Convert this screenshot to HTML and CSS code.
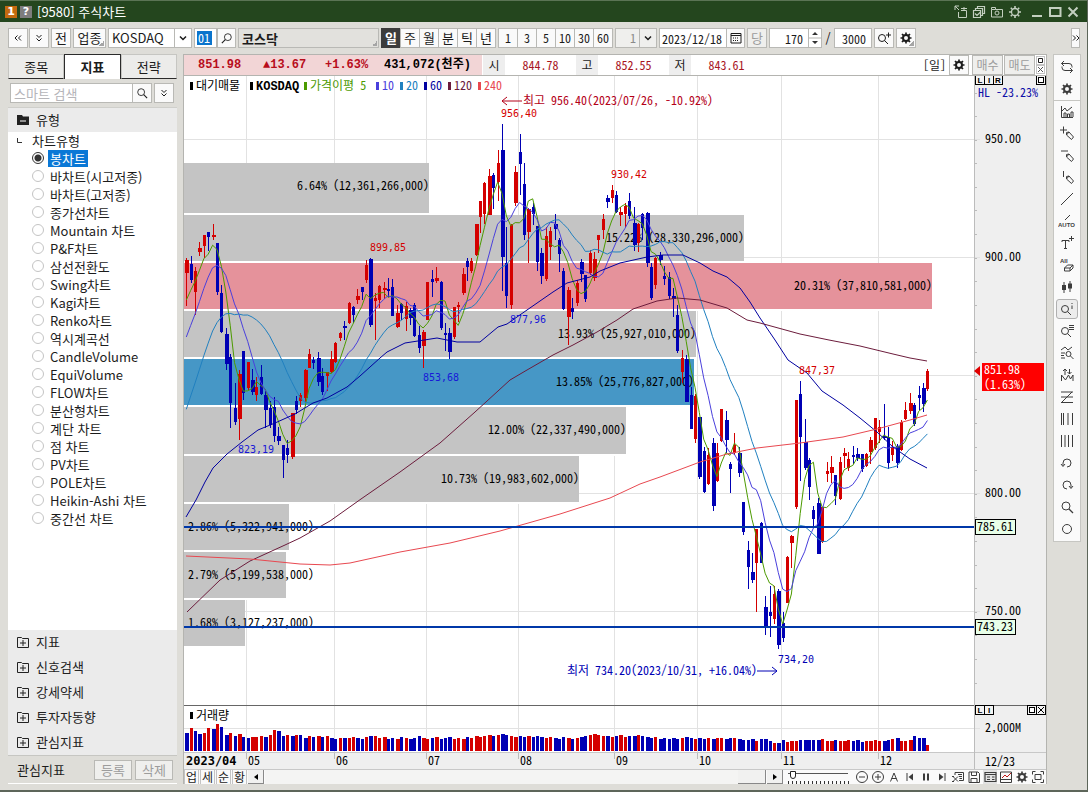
FILE: index.html
```html
<!DOCTYPE html>
<html lang="ko">
<head>
<meta charset="utf-8">
<title>[9580] 주식차트</title>
<link rel="stylesheet" href="styles.css">
</head>
<body>
<svg class="defs" aria-hidden="true">
  <symbol id="gear" viewBox="0 0 14 14"><circle cx="7" cy="7" r="3" fill="none" stroke="currentColor" stroke-width="2"/><path d="M7 1.500v2.500M7 10v2.500M1.500 7H4M10 7h2.500M3 3l1.700 1.700M9.300 9.300L11 11M11 3L9.300 4.700M4.700 9.300L3 11" stroke="currentColor" stroke-width="1.700" fill="none"/></symbol>
  <symbol id="sun" viewBox="0 0 14 14"><circle cx="7" cy="7" r="3.500" fill="none" stroke="currentColor" stroke-width="1.300"/><path d="M7 1v2M7 11v2M1 7h2M11 7h2M2.800 2.800l1.400 1.400M9.800 9.800l1.400 1.400M11.200 2.800L9.800 4.200M4.200 9.800l-1.400 1.400" stroke="currentColor" stroke-width="1.600" fill="none"/></symbol>
  <symbol id="lens" viewBox="0 0 14 14"><circle cx="6" cy="6" r="4" fill="none" stroke="currentColor"/><path d="M9 9l4 4" stroke="currentColor" stroke-width="1.300"/></symbol>
  <symbol id="down" viewBox="0 0 10 10"><path d="M2 3.500l3 3 3-3" fill="none" stroke="currentColor" stroke-width="1.500"/></symbol>
  <symbol id="ddown" viewBox="0 0 10 10"><path d="M2.500 2L5 4.500 7.500 2M2.500 5.500L5 8l2.500-2.500" fill="none" stroke="currentColor"/></symbol>
  <symbol id="dleft" viewBox="0 0 10 10"><path d="M4.500 2.500L2 5l2.500 2.500M8 2.500L5.500 5 8 7.500" fill="none" stroke="currentColor"/></symbol>
  <symbol id="dright" viewBox="0 0 10 10"><path d="M2 2.500L4.500 5 2 7.500M5.500 2.500L8 5 5.500 7.500" fill="none" stroke="currentColor"/></symbol>
  <symbol id="plusbox" viewBox="0 0 12 12"><path d="M.5 1.500h4l1 1h6v9H.5zM3 7h6M6 4v6" fill="none" stroke="currentColor"/></symbol>
  <symbol id="pencil" viewBox="0 0 14 14"><path d="M6.500 6.500l2.500-.5 4.500 5-2 2.500-5-4.500zM6.500 9l2.500-3" fill="none" stroke="currentColor"/></symbol>
</svg>

<header class="titlebar">
  <span class="badge badge-num">1</span><span class="badge badge-help">?</span>
  <h1 class="title">[9580] 주식차트</h1>
  <div class="window-tools">
    <button aria-label="분리"><svg viewBox="0 0 14 14"><path d="M1 5V1h4M1 1l4 4M7 3.500h6M4.500 7v5.500h8V5.500H7M10 2v3" fill="none" stroke="currentColor"/></svg></button>
    <button aria-label="복사"><svg viewBox="0 0 14 14"><path d="M1.500 5.500h7v7h-7zM3.500 5V3.500h7v7H9M5.500 3V1.500h7v7H11M3 8.500l2 2 4-4" fill="none" stroke="currentColor" stroke-width="1.200"/></svg></button>
    <button aria-label="캡처"><svg viewBox="0 0 14 14"><path d="M1.500 4.500V2.500h4v2h7v7.500h-11V4.500h4" fill="none" stroke="currentColor"/><circle cx="7" cy="8" r="2" fill="none" stroke="currentColor"/></svg></button>
    <button aria-label="설정"><svg><use href="#sun"/></svg></button>
    <button aria-label="최소화" class="wide"><svg viewBox="0 0 14 14"><path d="M2 11h10" stroke="currentColor" stroke-width="2"/></svg></button>
    <button aria-label="최대화"><svg viewBox="0 0 14 14"><path d="M2 3h10.500v8H2z" fill="none" stroke="currentColor" stroke-width="2"/></svg></button>
    <button aria-label="닫기"><svg viewBox="0 0 14 14"><path d="M2.500 2.500l9 9M11.500 2.500l-9 9" stroke="currentColor" stroke-width="2"/></svg></button>
  </div>
</header>

<div class="toolbar">
  <div class="cluster tight">
    <button class="btn sq" aria-label="이전"><svg class="i10"><use href="#dleft"/></svg></button>
    <button class="btn sq" aria-label="펼치기"><svg class="i10"><use href="#ddown"/></svg></button>
  </div>
  <button class="btn sq">전</button>
  <button class="btn corner kind">업종</button>
  <div class="field market"><select aria-label="시장"><option>KOSDAQ</option></select><svg class="i10"><use href="#down"/></svg></div>
  <div class="cluster">
    <div class="field code"><input aria-label="종목코드" value="01"></div>
    <button class="btn sq flip" aria-label="검색"><svg class="i12"><use href="#lens"/></svg></button>
  </div>
  <div class="field name"><input aria-label="종목명" value="코스닥" readonly></div>
  <div class="cluster seg">
    <button class="btn on">일</button><button class="btn">주</button><button class="btn">월</button><button class="btn">분</button><button class="btn">틱</button><button class="btn">년</button>
  </div>
  <div class="cluster seg num">
    <button class="btn">1</button><button class="btn">3</button><button class="btn">5</button><button class="btn">10</button><button class="btn">30</button><button class="btn">60</button>
  </div>
  <div class="field unit num"><select aria-label="단위" disabled><option>1</option></select><svg class="i10"><use href="#down"/></svg></div>
  <div class="cluster">
    <div class="field date num"><input aria-label="날짜" value="2023/12/18"></div>
    <button class="btn sq" aria-label="달력"><svg class="i12" viewBox="0 0 12 12"><path d="M1 1.500h10v9.500H1zM1 3.500h10" fill="none" stroke="currentColor"/><path d="M3 6h6M3 8.500h6" stroke="currentColor" stroke-dasharray="1 1"/></svg></button>
  </div>
  <button class="btn sq" disabled>당</button>
  <div class="field count num"><input aria-label="봉 개수" value="170"><svg class="spin" viewBox="0 0 12 18"><path d="M0 9h12" stroke="#b4b4b0"/><path d="M3 6l3-3 3 3zM3 12h6l-3 3z" fill="#333"/></svg></div>
  <span class="slash">/</span>
  <div class="field total num"><input aria-label="전체 개수" value="3000"></div>
  <button class="btn sq" aria-label="확대"><svg class="i14" viewBox="0 0 14 14"><circle cx="5" cy="7" r="3.500" fill="none" stroke="currentColor"/><path d="M7.500 9.500l3.500 3.500M9 4h5M11.500 1.500v5" stroke="currentColor"/></svg></button>
  <button class="btn sq corner" aria-label="차트 설정"><svg class="i14"><use href="#gear"/></svg></button>
  <button class="btn more" aria-label="더보기"><svg class="i10"><use href="#dright"/></svg></button>
</div>

<main class="main">
  <aside class="side">
    <nav class="tabs"><button>종목</button><button class="on">지표</button><button>전략</button></nav>
    <div class="search">
      <div class="field"><input aria-label="스마트 검색" placeholder="스마트 검색"></div>
      <button class="btn sq" aria-label="찾기"><svg class="i12"><use href="#lens"/></svg></button>
      <button class="btn sq apart" aria-label="펼치기"><svg class="i10"><use href="#ddown"/></svg></button>
    </div>
    <button class="group top"><svg class="i12" viewBox="0 0 12 12"><path d="M0 1h5l1 1.500h6V11H0z" fill="currentColor"/><path d="M3 7h6" stroke="#fff"/></svg>유형</button>
    <fieldset class="tree">
      <legend><svg viewBox="0 0 8 8"><path d="M1.500 1v4.500H6" fill="none" stroke="#333"/></svg>차트유형</legend>
      <label><input type="radio" name="type" checked><span>봉차트</span></label>
      <label><input type="radio" name="type"><span>바차트(시고저종)</span></label>
      <label><input type="radio" name="type"><span>바차트(고저종)</span></label>
      <label><input type="radio" name="type"><span>종가선차트</span></label>
      <label><input type="radio" name="type"><span>Mountain 차트</span></label>
      <label><input type="radio" name="type"><span>P&amp;F차트</span></label>
      <label><input type="radio" name="type"><span>삼선전환도</span></label>
      <label><input type="radio" name="type"><span>Swing차트</span></label>
      <label><input type="radio" name="type"><span>Kagi차트</span></label>
      <label><input type="radio" name="type"><span>Renko차트</span></label>
      <label><input type="radio" name="type"><span>역시계곡선</span></label>
      <label><input type="radio" name="type"><span>CandleVolume</span></label>
      <label><input type="radio" name="type"><span>EquiVolume</span></label>
      <label><input type="radio" name="type"><span>FLOW차트</span></label>
      <label><input type="radio" name="type"><span>분산형차트</span></label>
      <label><input type="radio" name="type"><span>계단 차트</span></label>
      <label><input type="radio" name="type"><span>점 차트</span></label>
      <label><input type="radio" name="type"><span>PV차트</span></label>
      <label><input type="radio" name="type"><span>POLE차트</span></label>
      <label><input type="radio" name="type"><span>Heikin-Ashi 차트</span></label>
      <label><input type="radio" name="type"><span>중간선 차트</span></label>
    </fieldset>
    <button class="group"><svg class="i12"><use href="#plusbox"/></svg>지표</button>
    <button class="group"><svg class="i12"><use href="#plusbox"/></svg>신호검색</button>
    <button class="group"><svg class="i12"><use href="#plusbox"/></svg>강세약세</button>
    <button class="group"><svg class="i12"><use href="#plusbox"/></svg>투자자동향</button>
    <button class="group"><svg class="i12"><use href="#plusbox"/></svg>관심지표</button>
    <div class="side-foot"><span>관심지표</span><button class="btn" disabled>등록</button><button class="btn" disabled>삭제</button></div>
  </aside>

  <section class="chart">
    <div class="quote">
      <div class="now"><b class="q1">851.98</b><b class="q2">▲13.67</b><b class="q3">+1.63%</b><b class="q4">431,072(천주)</b></div>
      <span class="tag">시</span><span class="val">844.78</span>
      <span class="tag">고</span><span class="val">852.55</span>
      <span class="tag">저</span><span class="val">843.61</span>
      <span class="period">[일]</span>
      <button class="btn sq" aria-label="설정"><svg class="i14"><use href="#gear"/></svg></button>
      <button class="btn trade" disabled>매수</button><button class="btn trade" disabled>매도</button>
      <div class="stack"><button aria-label="최대화"><svg viewBox="0 0 9 9"><path d="M2.500 2.500h4v4h-4z" fill="none" stroke="#222"/></svg></button><button aria-label="닫기"><svg viewBox="0 0 9 9"><path d="M2 2l5 5M7 2L2 7" stroke="#555"/></svg></button></div>
    </div>
    <svg class="plot" id="plot" role="img" aria-label="코스닥 일봉 차트"></svg>
    <div class="foot">
      <button class="mini">업</button><button class="mini">세</button><button class="mini">순</button><button class="mini">황</button>
      <button class="arrow" aria-label="왼쪽"><svg viewBox="0 0 8 8"><path d="M6 1v6L2 4z"/></svg></button>
      <div class="track"><div class="thumb"></div></div>
      <button class="arrow" aria-label="오른쪽"><svg viewBox="0 0 8 8"><path d="M2 1v6l4-3z"/></svg></button>
      <div class="range"><input type="range" aria-label="배율" min="0" max="100" value="4"></div>
      <div class="foot-icons">
        <button aria-label="축소"><svg viewBox="0 0 14 14"><circle cx="7" cy="7" r="5.500"/><path d="M4 7h6"/></svg></button>
        <button aria-label="확대"><svg viewBox="0 0 14 14"><circle cx="7" cy="7" r="5.500"/><path d="M4 7h6M7 4v6"/></svg></button>
        <button aria-label="글자"><svg viewBox="0 0 14 14"><path d="M3.500 11.500L7 3l3.500 8.500M4.500 8.500h5"/></svg></button>
        <button aria-label="처음"><svg viewBox="0 0 14 14"><path d="M4 3v8"/><path class="solid" d="M10 3.500v7L5.500 7z"/></svg></button>
        <button aria-label="정지"><svg viewBox="0 0 14 14"><path d="M5 3.500v7M9 3.500v7" stroke-width="2"/></svg></button>
        <button aria-label="끝"><svg viewBox="0 0 14 14"><path d="M10 3v8"/><path class="solid" d="M4 3.500v7L8.500 7z"/></svg></button>
        <button aria-label="엑셀"><svg viewBox="0 0 14 14"><path d="M4 5V2.500h8.500v8H8M7 4.500h4M8 6.500h3M8.500 8.500H11M2 6.500l5 5M7 6.500l-5 5M1 6.500h2M1 11.500h2"/></svg></button>
        <button aria-label="저장"><svg viewBox="0 0 14 14"><path d="M2 2h9l1.500 1.500V12.500H2zM4.500 2v3.500h5V2M4 12.500V8.500h6v4"/></svg></button>
        <button aria-label="표" class="on"><svg viewBox="0 0 14 14"><path d="M2 2.500h11v9H2zM2 4.500h11M4 7h3M4 9.500h3M9 7h2.500M9 9.500h2.500" stroke-width="1.200"/></svg></button>
        <button aria-label="차트"><svg viewBox="0 0 14 14"><path d="M1.500 2h11v10.500h-11zM2 9.500h10"/><path d="M3 8l3-3 2 2 4-4" stroke="#c01818"/></svg></button>
        <button aria-label="설정"><svg><use href="#gear" stroke="none"/></svg></button>
        <button aria-label="전체"><svg viewBox="0 0 14 14"><path d="M1.500 4.500v-3h3M9.500 1.500h3v3M12.500 9.500v3h-3M4.500 12.500h-3v-3M4 4.500h6v5H4z"/></svg></button>
      </div>
    </div>
  </section>

  <aside class="rail">
    <button aria-label="새로고침"><svg viewBox="0 0 14 14"><path d="M4 1L1.500 3.500 4 6M1.500 3.500H9a3 3 0 013 3v1M10 8l2.500 2.500L10 13M12.500 10.500H5a3 3 0 01-3-3v-1"/></svg></button>
    <button aria-label="설정"><svg><use href="#gear" stroke="none"/></svg></button>
    <button aria-label="지표 추가" class="rule"><svg viewBox="0 0 14 14"><path d="M1.500 1v11.500H13M4 12V8h2v4M7.500 12V9h2v3M11 12V7h2v5M2 6l3-3 2 3 5-4"/></svg></button>
    <button aria-label="십자선"><svg viewBox="0 0 14 14"><path d="M0 4h7M3.500 .5v7"/><use href="#pencil"/></svg></button>
    <button aria-label="수평선"><svg viewBox="0 0 14 14"><path d="M1 3h7"/><use href="#pencil"/></svg></button>
    <button aria-label="수직선"><svg viewBox="0 0 14 14"><path d="M3.500 1v6"/><use href="#pencil"/></svg></button>
    <button aria-label="추세선"><svg viewBox="0 0 14 14"><path d="M1 13L13 1"/></svg></button>
    <button aria-label="자동 추세선"><svg class="w16" viewBox="0 0 18 14"><path d="M7 6l5-5"/><text x="0" y="13">AUTO</text></svg></button>
    <button aria-label="문자"><svg viewBox="0 0 14 14"><path d="M2 6V4.500h7V6M5.500 4.500v8M4 12.500h3M9 2.500h5M11.500 0v5"/></svg></button>
    <button aria-label="모두 지우기"><svg viewBox="0 0 14 14"><text x="0" y="5">All</text><path d="M4.500 10l3-3H13l-3 3zM4.500 10v3H10v-3M10 13l3-3V7"/></svg></button>
    <button aria-label="봉"><svg viewBox="0 0 14 14"><path d="M4 2v11M10 1v11"/><path class="solid" d="M2 5h4v5H2zM8 3.500h4v5H8z"/></svg></button>
    <button aria-label="정보" class="on"><svg viewBox="0 0 14 14"><circle cx="5" cy="7" r="3.500"/><path d="M7.500 9.500L11 13M12 1v1M12 3.500V7"/></svg></button>
    <button aria-label="목록 조회"><svg viewBox="0 0 14 14"><circle cx="5" cy="7" r="3.500"/><path d="M7.500 9.500L11 13M9 1.500h5M9 3.500h5M9 5.500h5"/></svg></button>
    <button aria-label="차트 조회"><svg viewBox="0 0 14 14"><path d="M1 4l4-3 3 3 4-3M1 7h4M1 9.500h3M1 12h4"/><circle cx="8.500" cy="8" r="2.500"/><path d="M10.500 10l3 3"/></svg></button>
    <button aria-label="패턴"><svg viewBox="0 0 14 14"><path d="M1.500 13V7l4 5 3-5 2 4 2.500-4v6M5 7V1M3 3l2-2 2 2M9.500 1v5M7.500 4l2 2 2-2"/></svg></button>
    <button aria-label="지그재그"><svg viewBox="0 0 14 14"><path d="M1 2h12M1 12.500h12M1 7h12M12 2L2 12"/></svg></button>
    <button aria-label="시간대"><svg viewBox="0 0 14 14"><path d="M1.500 1v12M3.500 1v12M8 1v12M12.500 1v12"/></svg></button>
    <button aria-label="등간격"><svg viewBox="0 0 14 14"><path d="M1.500 1v12M5 1v12M8.500 1v12M12.500 1v12"/></svg></button>
    <button aria-label="되돌리기"><svg viewBox="0 0 14 14"><path d="M3 9.500V7a4 4 0 114 4M1 8l2 2.500L5 8"/></svg></button>
    <button aria-label="다시"><svg viewBox="0 0 14 14"><path d="M11 9.500V7a4 4 0 10-4 4M9 8l2 2.500L13 8"/></svg></button>
    <button aria-label="돋보기"><svg><use href="#lens" stroke="none"/></svg></button>
    <button aria-label="원"><svg viewBox="0 0 14 14"><circle cx="7" cy="7" r="4.500"/></svg></button>
  </aside>
</main>
<script src="chart.js"></script>
</body>
</html>
```
FILE: styles.css
```css
* { box-sizing: border-box; }
body {
  margin: 0; min-height: 100vh; display: flex; flex-direction: column;
  background: #deddd8; color: #1c1c1c;
  border: solid #5d665a; border-width: 0 1px 2px 0;
  font: 13px/16px "Noto Sans CJK KR", sans-serif;
}
button, input, select { font: inherit; color: inherit; margin: 0; padding: 0; min-width: 0; }
button { border: 0; background: none; }
.defs { position: absolute; width: 0; height: 0; }
.i10 { width: 10px; height: 10px; flex: none; }
.i12 { width: 12px; height: 12px; flex: none; }
.i14 { width: 14px; height: 14px; flex: none; }

.titlebar { display: flex; align-items: center; height: 22px; padding: 0 7px 0 5px; background: #24461e; border-top: 1px solid #5b7455; color: #fff; }
.badge { width: 12px; height: 12px; margin-right: 3px; font: bold 11px/12px "DejaVu Sans", sans-serif; text-align: center; }
.badge-num { background: #c46a10; }
.badge-help { background: #7d7d7d; }
.title { margin: 0 0 0 2px; font-size: 13px; font-weight: 400; }
.window-tools { margin-left: auto; display: flex; gap: 4px; color: #c3cfc0; }
.window-tools button { width: 14px; height: 14px; }
.window-tools svg { display: block; width: 14px; height: 14px; }
.window-tools .wide { margin-left: 4px; }

.toolbar { display: flex; align-items: center; gap: 2px; height: 32px; padding-left: 8px; }
.cluster { display: flex; }
.tight { gap: 1px; }
.btn { display: flex; align-items: center; justify-content: center; height: 20px; border: 1px solid #b9b9b5; background: #fafafa; white-space: nowrap; flex: none; }
.btn:disabled { color: #9c9c9c; background: #efefed; }
.sq { width: 20px; }
.cluster .sq { width: 19px; }
.tight .sq { width: 20px; }
.kind { width: 33px; }
.corner { background: linear-gradient(135deg, transparent 50%, #a5a5a5 50%) right 1px bottom 1px / 5px 5px no-repeat #fafafa; }
.flip svg { transform: scaleX(-1); }
.field { display: flex; align-items: center; height: 20px; border: 1px solid #b9b9b5; background: #fff; flex: none; }
.field input, .field select { flex: 1; width: 100%; height: 18px; border: 0; background: none; outline: 0; padding: 0 3px; appearance: none; }
.field svg { pointer-events: none; flex: none; }
.num { font: 12px/16px "Noto Sans Mono CJK KR", "Noto Sans CJK KR", monospace; }
.market { width: 84px; }
.market svg, .unit svg { width: 17px; height: 18px; padding: 4px 3px; border-left: 1px solid #b9b9b5; }
.code { width: 23px; }
.field.code input { flex: none; width: 15px; height: 14px; margin-left: 2px; padding: 0 1px; background: #0a74cc; color: #fff; font: 12px/14px "Noto Sans Mono CJK KR", "Noto Sans CJK KR", monospace; }
.name { width: 141px; background: linear-gradient(135deg, transparent 50%, #a5a5a5 50%) right 1px bottom 1px / 5px 5px no-repeat #e2e1dd; }
.name input { font-weight: 700; }
.seg .btn { width: 20px; margin-right: -1px; }
.seg { margin-right: 1px; }
.seg .on { background: #3c3c3c; border-color: #3c3c3c; color: #fff; font-weight: 700; }
.unit { width: 42px; background: #efefed; }
.unit select { text-align: right; color: #8a8a8a; opacity: 1; }
.date { width: 67px; border-right: 0; }
.date input { padding: 0 0 0 2px; }
.count { width: 53px; }
.count input, .total input { text-align: right; padding-right: 5px; }
.spin { width: 13px; height: 18px; border-left: 1px solid #b9b9b5; }
.slash { width: 8px; text-align: center; }
.total { width: 38px; }
.more { width: 9px; margin: 0 7px 0 auto; }

.main { flex: 1; display: flex; gap: 6px; padding: 0 6px 6px 8px; min-height: 0; }

.side { width: 169px; flex: none; display: flex; flex-direction: column; border-bottom: 1px solid #fff; }
.tabs { display: flex; height: 25px; }
.tabs button { flex: 1; border: 1px solid #c6c6c2; border-bottom: 1px solid #2b2b2b; background: #ececea; }
.tabs .on { border: 1px solid #2b2b2b; border-bottom: 0; background: #fff; font-weight: 700; }
.search { display: flex; padding: 4px 3px; height: 28px; }
.search .field { flex: 1; margin-left: -1px; }
.search input::placeholder { color: #b5b5b9; opacity: 1; }
.search .btn { margin-left: -1px; }
.search .apart { margin-left: 2px; }
.group { display: flex; align-items: center; gap: 7px; height: 25px; padding: 0 0 1px 9px; background: #ebebeb; text-align: left; color: #222; flex: none; }
.group.top { border-top: 1px solid #cfcfcb; }
.tree { flex: 1; margin: 0; padding: 0 0 0 24px; border: 0; background: #fff; min-width: 0; min-height: 396px; }
.tree legend { float: left; width: 100%; margin-left: -16px; padding: 0; height: 17px; line-height: 17px; display: flex; align-items: center; gap: 8px; }
.tree legend svg { width: 8px; height: 8px; }
.tree label { clear: both; display: flex; align-items: center; gap: 4px; height: 18px; }
.tree input { appearance: none; width: 12px; height: 12px; border: 1px solid #c4c4c4; border-radius: 50%; flex: none; }
.tree input:checked { border-color: #333; background: radial-gradient(circle, #333 0 3px, #fff 4px); }
.tree span { padding: 0 2px; line-height: 17px; }
.tree input:checked + span { background: #0a78d6; color: #fff; }
.side-foot { display: flex; align-items: center; gap: 3px; height: 28px; padding: 0 4px 0 9px; border-top: 1px solid #c6c6c2; }
.side-foot span { flex: 1; }
.side-foot .btn { width: 38px; }

.chart { flex: 1; min-width: 0; display: flex; flex-direction: column; border: solid #b4b4b0; border-width: 1px 1px 0; background: #fff; font: 12px/14px "Noto Sans Mono CJK KR", "Noto Sans CJK KR", monospace; }
.quote { display: flex; align-items: center; height: 21px; border-bottom: 1px solid #b4b4b0; gap: 1px; padding-right: 1px; }
.now { display: flex; align-items: center; align-self: stretch; padding-left: 14px; background: #f2d5d6; color: #b80d1c; font: 12px/14px "Liberation Mono", "Noto Sans CJK KR", monospace; }
.q1 { width: 65px; }
.q2 { width: 62px; }
.q3 { width: 59px; }
.q4 { width: 98px; color: #000; }
.tag { align-self: stretch; width: 22px; line-height: 20px; text-align: center; background: #eee; }
.val { width: 69px; text-align: center; color: #a8141e; }
.period { margin-left: auto; }
.trade { width: 31px; }
.quote .sq { margin: 0 2px; }
.stack { display: flex; flex-direction: column; }
.stack button { width: 9px; height: 9px; border: 1px solid #c4c4c4; }
.stack svg { display: block; width: 9px; height: 9px; margin: -1px; }
.plot { flex: 1; min-height: 0; height: 0; width: 100%; display: block; }
.plot .label { font: 10px "DejaVu Sans Mono", monospace; }
.plot .bold { font: bold 12px "Liberation Mono", monospace; }
.plot .month { font: bold 12px "DejaVu Sans Mono", monospace; }
.plot .key { font: bold 8px "Liberation Sans", sans-serif; }
.foot { display: flex; height: 15px; background: #fafafa; gap: 1px; border-top: 1px solid #c8c8c8; }
.mini { width: 15px; border: 1px solid #c4c4c4; border-width: 0 1px; line-height: 14px; }
.arrow { width: 16px; border: 1px solid #888; border-width: 0 1px 1px 0; background: #f1f1f0; display: flex; align-items: center; justify-content: center; }
.arrow svg { width: 8px; height: 8px; flex: none; }
.track { flex: 1; background: #f4f4f3; display: flex; justify-content: flex-end; }
.thumb { width: 28px; border: 1px solid #888; border-width: 0 1px 1px 0; background: #f1f1f0; }
.range { width: 62px; margin: 0 4px; padding-top: 1px; background: repeating-linear-gradient(90deg, #333 0 1px, transparent 1px 4px) left bottom / 100% 3px no-repeat; }
.range input { appearance: none; display: block; width: 60px; height: 8px; background: linear-gradient(#555, #555) center 2px / 100% 1px no-repeat; }
.range input::-webkit-slider-thumb { appearance: none; width: 6px; height: 8px; border: 1px solid #222; border-radius: 0 0 3px 3px; background: #fff; }
.foot-icons { display: flex; gap: 2px; padding-right: 1px; }
.foot-icons button { width: 14px; height: 14px; }
.foot-icons .on { background: #e2e2e2; }
.foot-icons svg, .rail svg { display: block; width: 14px; height: 14px; fill: none; stroke: #3c3c3c; color: #3c3c3c; }
.rail .w16 { width: 18px; }
.solid { fill: #3c3c3c; stroke: none; }

.rail { width: 28px; flex: none; align-self: flex-start; background: #fafafa; border: 1px solid #c6c6c2; padding: 1px 0; }
.rail button { width: 26px; height: 22px; display: flex; align-items: center; justify-content: center; }
.rail .rule { border-top: 1px solid #c6c6c2; }
.rail .on { border: 1px solid #b0b0b0; border-radius: 3px; background: #ececec; width: 22px; height: 20px; margin: 1px 2px; }
.rail text { font: bold 6px "Liberation Sans", sans-serif; stroke: none; fill: #3c3c3c; }
```
FILE: chart.js
```js
// Chart space: x 184..1046, y 76..769; scaled to the size of the element.
const ORIGIN = { x: 184, y: 76, w: 862, h: 693 };
const STEP = 4.385, FIRST = 186.3;
const RED = '#d40000', BLUE = '#0000b4';

// colour, high, body top, body bottom, low
const candles = `R258,260,273,306 B256,264,280,283 R267,271,292,315 R242,248,252,256 R235,235,246,258 B232,232,237,251 R224,235,237,240 B243,243,292,295 B285,293,332,333 B328,334,364,370
B354,357,403,428 B383,408,422,425 R370,374,419,440 B351,351,393,400 R362,362,388,390 B369,380,392,395 R377,387,395,401 B365,377,394,395 B391,395,410,428 B401,408,425,428
B397,407,436,442 B427,436,441,445 B445,445,460,478 B440,448,455,463 R413,413,457,459 B396,401,410,414 R393,395,401,407 R369,370,398,402 R349,354,368,368 B357,360,363,369
B352,358,382,386 B368,376,392,395 R372,372,376,391 R351,359,372,373 R342,343,362,363 R332,333,338,341 B321,326,327,340 R302,303,323,324 B306,307,315,323 R289,296,300,304
B287,287,292,300 R260,265,280,283 B258,259,325,327 R293,298,301,340 R285,286,300,308 R282,288,290,299 B278,289,290,297 B279,287,316,316 R305,313,327,328 B303,304,313,320
R302,306,319,331 B308,310,318,325 B303,305,336,337 B326,335,348,353 R330,332,346,368 R282,282,320,320 B270,279,282,297 R267,278,281,283 B281,282,328,330 B323,333,335,351
B328,333,352,359 R307,307,337,339 R302,305,307,322 R268,274,293,295 B258,261,267,281 R258,261,271,273 R224,224,255,256 R201,201,217,233 R182,183,214,224 R169,176,215,215
B173,175,188,209 R150,163,182,201 B124,150,257,291 B227,263,296,308 R224,225,305,309 R166,172,203,206 B134,152,164,195 B163,184,235,240 R208,209,232,263 B203,207,214,225
B226,226,262,271 B248,253,276,284 R227,236,279,281 R227,231,247,260 B214,224,229,240 B238,240,254,272 B268,271,309,310 R287,290,317,345 B298,308,312,319 R280,283,303,306
B259,262,274,282 B275,275,299,302 R250,253,273,275 R252,259,278,281 R235,235,240,253 R214,219,230,239 B195,198,202,208 R185,190,198,203 B191,195,212,213 R207,212,215,226
R203,206,214,227 B193,201,216,219 B207,223,245,251 R223,224,243,252 B213,214,228,240 B212,213,263,267 B263,267,298,300 R257,258,285,289 B252,255,260,265 B266,276,279,285
B272,277,296,299 B288,296,299,317 B305,315,351,353 R350,358,372,383 B355,359,402,402 B387,395,429,429 R394,396,439,443 B417,417,477,479 B447,451,492,493 R448,455,484,485
B438,443,506,511 R443,453,481,482 R409,409,441,442 B411,420,440,453 B462,464,469,493 R433,445,453,455 B447,453,473,477 B502,502,532,535 B541,550,567,589 B553,572,580,583
R529,529,563,612 B522,523,563,563 B596,607,627,635 B586,612,616,637 R586,594,619,624 B589,591,645,649 B612,623,638,642 R556,557,603,603 R535,536,543,568 R400,400,507,509
B381,394,437,481 B419,442,468,470 B458,460,487,500 B506,510,519,528 B498,503,554,554 R507,507,542,543 R462,471,474,482 R456,467,473,483 B475,475,496,505 R457,462,499,500
R448,453,456,468 R452,459,468,471 B446,455,457,464 B448,454,458,461 B454,454,469,472 R453,454,466,467 R437,440,452,464 R418,418,448,450 R420,427,432,443 B404,436,437,440
B427,437,463,469 R441,447,455,461 B444,446,463,468 R420,422,450,451 R402,410,419,420 R393,403,411,414 B403,405,424,426 B386,395,398,410 B383,388,404,412 R369,371,389,391`
  .split(/\s+/).map(s => [s[0], ...s.slice(1).split(',').map(Number)]);

// Closes before the first visible bar, for the moving averages
const history = [545, 533, 520, 506, 491, 476, 460, 444, 428, 412, 396, 385, 374, 363, 352, 328, 316, 304, 292];

const ma60 = '186,517 196,500 205,482 213,468 227,454 242,442 258,430 275,423 295,414 313,403 327,398 347,387 360,376 380,358 387,352 405,343 437,338 457,342 480,342 498,327 507,324 527,310 553,292 567,283 590,277 600,271 620,263 647,257 663,255 683,255 700,263 713,271 727,277 740,288 750,302 760,318 775,340 788,360 807,373 822,391 843,405 860,418 877,432 893,447 910,459 927,468';
const ma120 = '187,612 220,580 250,561 285,545 300,538 330,521 361,499 400,472 440,443 475,412 510,380 527,370 553,355 573,345 597,332 617,320 633,309 657,301 677,298 700,300 727,308 747,320 760,323 800,334 829,340 860,346 893,354 910,358 927,361';
const ma240 = '186,556 250,559 300,564 330,565 350,563 400,552 450,543 500,531 560,514 610,498 640,484 660,477 700,462 727,454 757,448 800,443 843,437 877,429 910,420 927,415';

// top, bottom, right edge, colour, label
const GREY = '#c4c4c4';
const profile = [
  [163, 213, 429, GREY, '6.64% (12,361,266,000)'],
  [215, 261, 744, GREY, '15.22% (28,330,296,000)'],
  [263, 309, 932, '#e5929b', '20.31% (37,810,581,000)'],
  [311, 357, 696, GREY, '13.93% (25,927,010,000)'],
  [359, 405, 694, '#4697c6', '13.85% (25,776,827,000)'],
  [407, 454, 626, GREY, '12.00% (22,337,490,000)'],
  [456, 502, 579, GREY, '10.73% (19,983,602,000)'],
  [504, 550, 289, GREY, '2.86% (5,322,941,000)'],
  [552, 598, 286, GREY, '2.79% (5,199,538,000)'],
  [600, 646, 245, GREY, '1.68% (3,127,237,000)']
];

const volHeights = [18,23,20,17,18,23,22,27,24,16,18,15,17,14,13,14,14,15,14,16,21,20,15,16,15,16,16,13,15,14,15,14,15,13,12,13,13,13,14,13,
  12,14,15,15,13,14,12,13,12,14,13,12,13,15,13,12,13,14,12,13,14,12,13,12,14,13,15,14,15,16,15,16,17,16,15,14,15,14,15,14,
  15,14,13,14,13,12,14,13,12,13,14,15,16,17,16,15,15,14,15,16,14,15,15,16,15,14,13,14,12,13,12,13,12,13,14,13,12,13,12,13,
  12,13,13,12,13,13,12,11,11,12,10,12,12,10,8,8,11,9,10,10,11,11,11,11,11,12,10,10,11,10,10,11,10,11,9,10,10,11,10,10,
  11,12,13,10,10,11,15,13,13,6];
const volColors = 'BRBBRRBRBBRBRBBRRRBRRBBRBRBBRBRBRBBRBRRBB';

const svg = document.getElementById('plot');

function draw() {
  const W = svg.clientWidth, H = svg.clientHeight;
  const X = x => Math.round((x - ORIGIN.x) * W / ORIGIN.w * 10) / 10;
  const Y = y => Math.round((y - ORIGIN.y) * H / ORIGIN.h * 10) / 10;
  const out = [];
  const rect = (l, t, r, b, fill) =>
    out.push(`<rect x="${X(l)}" y="${Y(t)}" width="${X(r) - X(l)}" height="${Y(b) - Y(t)}" fill="${fill}" shape-rendering="crispEdges"/>`);
  const text = (x, y, s, fill = '#000', cls = '', anchor = 'start') =>
    out.push(`<text x="${X(x)}" y="${Y(y)}" fill="${fill}" class="${cls}" text-anchor="${anchor}">${s}</text>`);
  const path = (pts, color) =>
    out.push(`<polyline points="${pts.map(p => X(p[0]) + ',' + Y(p[1])).join(' ')}" fill="none" stroke="${color}"/>`);
  const parse = s => s.split(' ').map(p => p.split(',').map(Number));

  // Panes and grid
  rect(975, 76, 1046, 769, '#efefef');
  rect(184, 752, 975, 769, '#efefef');
  [246, 334, 426, 518, 614, 697, 781, 878].forEach(x => rect(x, 76, x + 1, 752, '#e2e2e2'));
  [139, 257, 375, 493, 611, 728].forEach(y => rect(184, y, 980, y + 1, '#e2e2e2'));
  for (let y = 92.500; y < 700; y += 23.6) rect(975, Math.round(y), 977, Math.round(y) + 1, '#bbb');

  // Volume profile
  profile.forEach(([t, b, r, color, label]) => {
    rect(184, t, r, b + 2, '#fff');
    rect(184, t, r, b, color);
    if (r < 400) text(188, t + 27, label);
    else text(r, t + 27, label, '#000', '', 'end');
  });

  // Candles
  candles.forEach(([c, high, top, bottom, low], i) => {
    const x = Math.round(FIRST + STEP * i), color = c === 'R' ? RED : BLUE;
    rect(x, high, x + 1, low, color);
    rect(x - 1, top, x + 2 + (i % 3 ? 0 : 1), Math.max(bottom, top + 2), color);
  });

  // Moving averages
  const closes = history.concat(candles.map(k => k[0] === 'R' ? k[2] : k[3]));
  const average = n => candles.map((_, i) => {
    const end = history.length + i + 1;
    return [FIRST + STEP * i, closes.slice(end - n, end).reduce((a, b) => a + b) / n];
  });
  path(average(5), '#4c9a00');
  path(average(10), '#4a40dc');
  path(average(20), '#2080c0');
  path(parse(ma60), '#0000a0');
  path(parse(ma120), '#6c1c3c');
  path(parse(ma240), '#e84850');

  // Support lines
  rect(184, 526, 975, 528, '#0038a8');
  rect(184, 626, 975, 628, '#0038a8');

  // Annotations
  [[501, 117, '956,40', RED], [370, 251, '899,85', RED], [611, 178, '930,42', RED], [799, 374, '847,37', RED],
   [510, 323, '877,96', '#1818d8'], [423, 381, '853,68', '#1818d8'], [238, 453, '823,19', '#1818d8'], [778, 663, '734,20', BLUE]]
    .forEach(([x, y, s, c]) => text(x, y, s, c, 'label'));
  text(523, 105, '최고 956.40(2023/07/26, -10.92%)', '#b40018');
  text(757, 675, '최저 734.20(2023/10/31, +16.04%)', BLUE, '', 'end');
  path([[522, 101], [502, 101]], '#b40018');
  path([[507, 97], [502, 101], [507, 105]], '#b40018');
  path([[757, 671], [777, 671]], BLUE);
  path([[772, 667], [777, 671], [772, 675]], BLUE);

  // Legend
  [[190, '대기매물', '#000', ''], [250, 'KOSDAQ', '#000', 'bold'], [304, '가격이평 5', '#4c9a00', ''], [376, '10', '#4a40dc', ''],
   [400, '20', '#2080c0', ''], [424, '60', '#0000a0', ''], [448, '120', '#6c1c3c', ''], [478, '240', '#e84850', '']]
    .forEach(([x, s, c, cls]) => { rect(x, 82, x + 3, 90, c); text(x + 6, 90, s, c, cls); });

  // Volume pane
  rect(184, 705, 1046, 706, '#666');
  rect(190, 712, 193, 719, '#000');
  text(196, 720, '거래량');
  volHeights.forEach((h, i) => {
    const x = Math.round(FIRST + STEP * i), c = volColors[i] || candles[i][0];
    rect(x - 1, 751 - h, x + 2 + (i % 3 ? 0 : 1), 751, c === 'R' ? RED : BLUE);
  });

  // Axes
  rect(184, 752, 1046, 753, '#c8c8c8');
  rect(974, 76, 975, 769, '#bcbcbc');
  text(186, 765, '2023/04', '#000', 'month');
  [[247, '05'], [335, '06'], [427, '07'], [519, '08'], [615, '09'], [698, '10'], [782, '11'], [879, '12']]
    .forEach(([x, s]) => { rect(x - 1, 753, x, 759, '#bbb'); text(x + 1, 765, s); });
  text(985, 766, '12/23');
  [[143, '950.00'], [261, '900.00'], [497, '800.00'], [615, '750.00'], [732, '2,000M']].forEach(([y, s]) => text(985, y, s));
  text(978, 97, 'HL -23.23%', '#1010a8');
  [[519, '785.61'], [619, '743.23']].forEach(([y, s]) => {
    rect(975, y, 1016, y + 16, '#000'); rect(976, y + 1, 1015, y + 15, '#e8ffe8'); text(977, y + 12, s);
  });
  rect(982, 363, 1044, 391, '#f00');
  out.push(`<path d="M${X(974)} ${Y(371)}L${X(980)} ${Y(366)}V${Y(376)}z" fill="#e00000"/>`);
  text(984, 374, '851.98', '#fff');
  text(984, 389, '(1.63%)', '#fff');

  // Pane buttons
  const key = (x, y, s) => {
    rect(x, y, x + 10, y + 10, '#000'); rect(x + 1, y + 1, x + 9, y + 9, '#f4f4f4');
    if (s === 'x') { path([[x + 2, y + 2], [x + 8, y + 8]], '#000'); path([[x + 8, y + 2], [x + 2, y + 8]], '#000'); }
    else if (s) text(x + 5, y + 8, s, '#000', 'key', 'middle');
    else { rect(x + 2, y + 2, x + 8, y + 8, '#000'); rect(x + 3, y + 3, x + 7, y + 7, '#fff'); }
  };
  key(975, 75, 'L'); key(984, 75, 'I'); key(993, 75, 'R'); key(1036, 75, '');
  key(975, 705, 'L'); key(984, 705, 'I'); key(1027, 705, ''); key(1036, 705, 'x');

  svg.innerHTML = out.join('');
}

draw();
window.addEventListener('resize', draw);
```
